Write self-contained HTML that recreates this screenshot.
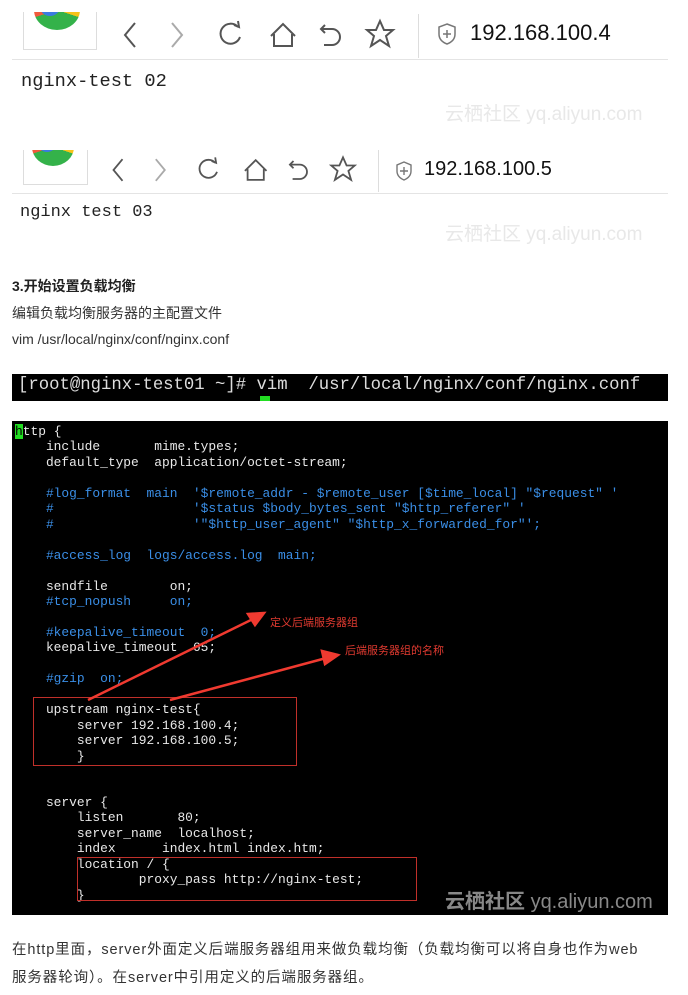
<!DOCTYPE html>
<html><head><meta charset="utf-8"><style>
*{margin:0;padding:0;box-sizing:border-box}
body{width:688px;height:995px;background:#fff;position:relative;overflow:hidden;font-family:"Liberation Sans","Noto Sans CJK SC",sans-serif}
.a{position:absolute}
.code{position:absolute;left:12px;top:421px;width:656px;height:494px;background:#000;overflow:hidden}
.code pre{position:absolute;left:3px;top:3px;font-family:"Liberation Mono","DejaVu Sans Mono",monospace;font-size:12.9px;line-height:15.45px;color:#e8e8e8;white-space:pre}
.c{color:#3a8ee6}
.wm{color:#e8e8e8;font-size:19px;white-space:nowrap}
</style></head><body>
<div class="a" style="left:23px;top:12px;width:74px;height:38px;border:1px solid #ddd;border-top:none;overflow:hidden">
<div class="a" style="left:10px;top:-22px;width:46px;height:40px;border-radius:50%;background:conic-gradient(#f7c21a 0 30%,#34b24a 30% 70%,#f05a3c 70% 100%)"></div>
<div class="a" style="left:16px;top:-14px;width:20px;height:18px;border-radius:50%;background:#3b7be0"></div></div>
<svg class="a" style="left:110px;top:15px" width="300" height="40" viewBox="0 0 300 40" fill="none" stroke="#555" stroke-width="2">
<path d="M25 8 L15 20 L25 32"/><path d="M62 8 L72 20 L62 32" stroke="#aaa"/>
<path d="M128 12 A10 10 0 1 0 130 22"/><path d="M124 10 L129 12 L128 6"/>
<path d="M161 21 L173 9 L185 21 M164 19 V31 H182 V19"/>
<path d="M215 10 L211 14 L215 18 M211 14 H222 A8 8 0 0 1 222 30 H214"/>
<path d="M270 6 L274 15 L283 15 L276 21 L279 31 L270 25 L261 31 L264 21 L257 15 L266 15 Z"/>
</svg>
<div class="a" style="left:418px;top:14px;width:1px;height:44px;background:#ddd"></div>
<svg class="a" style="left:438px;top:22px" width="20" height="24" fill="none" stroke="#777" stroke-width="1.5"><path d="M9 2 L17 5 V12 Q17 19 9 22 Q1 19 1 12 V5 Z"/><path d="M9 8 V16 M5 12 H13"/></svg>
<div class="a" style="left:470px;top:20px;font-size:22px;color:#111">192.168.100.4</div>
<div class="a" style="left:12px;top:59px;width:656px;height:1px;background:#e4e4e4"></div>
<div class="a" style="left:21px;top:70px;font-family:'Liberation Mono',monospace;font-size:18.7px;color:#222">nginx-test 02</div>
<div class="a wm" style="left:445px;top:99px">云栖社区 yq.aliyun.com</div>
<div class="a" style="left:23px;top:150px;width:65px;height:35px;border:1px solid #ddd;border-top:none;overflow:hidden">
<div class="a" style="left:8px;top:-22px;width:42px;height:38px;border-radius:50%;background:conic-gradient(#f7c21a 0 30%,#34b24a 30% 70%,#f05a3c 70% 100%)"></div>
<div class="a" style="left:14px;top:-14px;width:18px;height:16px;border-radius:50%;background:#3b7be0"></div></div>
<svg class="a" style="left:100px;top:152px" width="270" height="36" viewBox="0 0 300 40" fill="none" stroke="#555" stroke-width="2">
<path d="M25 8 L15 20 L25 32"/><path d="M62 8 L72 20 L62 32" stroke="#aaa"/>
<path d="M128 12 A10 10 0 1 0 130 22"/><path d="M124 10 L129 12 L128 6"/>
<path d="M161 21 L173 9 L185 21 M164 19 V31 H182 V19"/>
<path d="M215 10 L211 14 L215 18 M211 14 H222 A8 8 0 0 1 222 30 H214"/>
<path d="M270 6 L274 15 L283 15 L276 21 L279 31 L270 25 L261 31 L264 21 L257 15 L266 15 Z"/>
</svg>
<div class="a" style="left:378px;top:150px;width:1px;height:42px;background:#ddd"></div>
<svg class="a" style="left:396px;top:160px" width="18" height="22" fill="none" stroke="#777" stroke-width="1.4"><path d="M8 2 L15 5 V11 Q15 17 8 20 Q1 17 1 11 V5 Z"/><path d="M8 7 V15 M4 11 H12"/></svg>
<div class="a" style="left:424px;top:158px;font-size:20px;color:#111">192.168.100.5</div>
<div class="a" style="left:12px;top:193px;width:656px;height:1px;background:#e4e4e4"></div>
<div class="a" style="left:20px;top:203px;font-family:'Liberation Mono',monospace;font-size:17px;color:#222">nginx test 03</div>
<div class="a wm" style="left:445px;top:219px">云栖社区 yq.aliyun.com</div>
<div class="a" style="left:12px;top:276px;font-size:14px;font-weight:bold;color:#222">3.开始设置负载均衡</div>
<div class="a" style="left:12px;top:303px;font-size:14px;color:#333">编辑负载均衡服务器的主配置文件</div>
<div class="a" style="left:12px;top:331px;font-size:14px;color:#333">vim /usr/local/nginx/conf/nginx.conf</div>
<div class="a" style="left:12px;top:374px;width:656px;height:27px;background:#000;overflow:hidden">
<div class="a" style="left:6px;top:2px;font-family:'Liberation Mono',monospace;font-size:17.3px;color:#ddd;white-space:pre">[root@nginx-test01 ~]# vim  /usr/local/nginx/conf/nginx.conf</div>
<div class="a" style="left:248px;top:22px;width:10px;height:5px;background:#2d2"></div></div>
<div class="code"><pre><span style="background:#2d2;color:#000">h</span>ttp {
    include       mime.types;
    default_type  application/octet-stream;

<span class="c">    #log_format  main  '$remote_addr - $remote_user [$time_local] "$request" '
    #                  '$status $body_bytes_sent "$http_referer" '
    #                  '"$http_user_agent" "$http_x_forwarded_for"';</span>

<span class="c">    #access_log  logs/access.log  main;</span>

    sendfile        on;
<span class="c">    #tcp_nopush     on;</span>

<span class="c">    #keepalive_timeout  0;</span>
    keepalive_timeout  65;

<span class="c">    #gzip  on;</span>

    upstream nginx-test{
        server 192.168.100.4;
        server 192.168.100.5;
        }


    server {
        listen       80;
        server_name  localhost;
        index      index.html index.htm;
        location / {
                proxy_pass http://nginx-test;
        }</pre>
<div class="a" style="left:21px;top:276px;width:264px;height:69px;border:1px solid #c0302a"></div>
<div class="a" style="left:65px;top:436px;width:340px;height:44px;border:1px solid #c0302a"></div>
<svg class="a" style="left:0;top:0" width="656" height="494"><g stroke="#f03a30" stroke-width="2.5" fill="#f03a30">
<line x1="76" y1="279" x2="245" y2="196"/><path d="M252 192 L236 193 L243 204 Z"/>
<line x1="158" y1="279" x2="318" y2="236"/><path d="M326 234 L310 230 L313 243 Z"/></g>
<text x="258" y="205" font-size="11" fill="#e03a30" font-family="Noto Sans CJK SC,sans-serif">定义后端服务器组</text>
<text x="333" y="233" font-size="11" fill="#e03a30" font-family="Noto Sans CJK SC,sans-serif">后端服务器组的名称</text></svg>
<div class="a" style="left:433px;top:464px;color:#888;font-size:20px;font-weight:bold;white-space:nowrap">云栖社区 <span style="font-weight:normal">yq.aliyun.com</span></div>
</div>
<div class="a" style="left:12px;top:936px;font-size:14.5px;color:#333;line-height:28px;width:680px;letter-spacing:0.9px;white-space:nowrap">在http里面，server外面定义后端服务器组用来做负载均衡（负载均衡可以将自身也作为web<br>服务器轮询）。在server中引用定义的后端服务器组。</div>
</body></html>
